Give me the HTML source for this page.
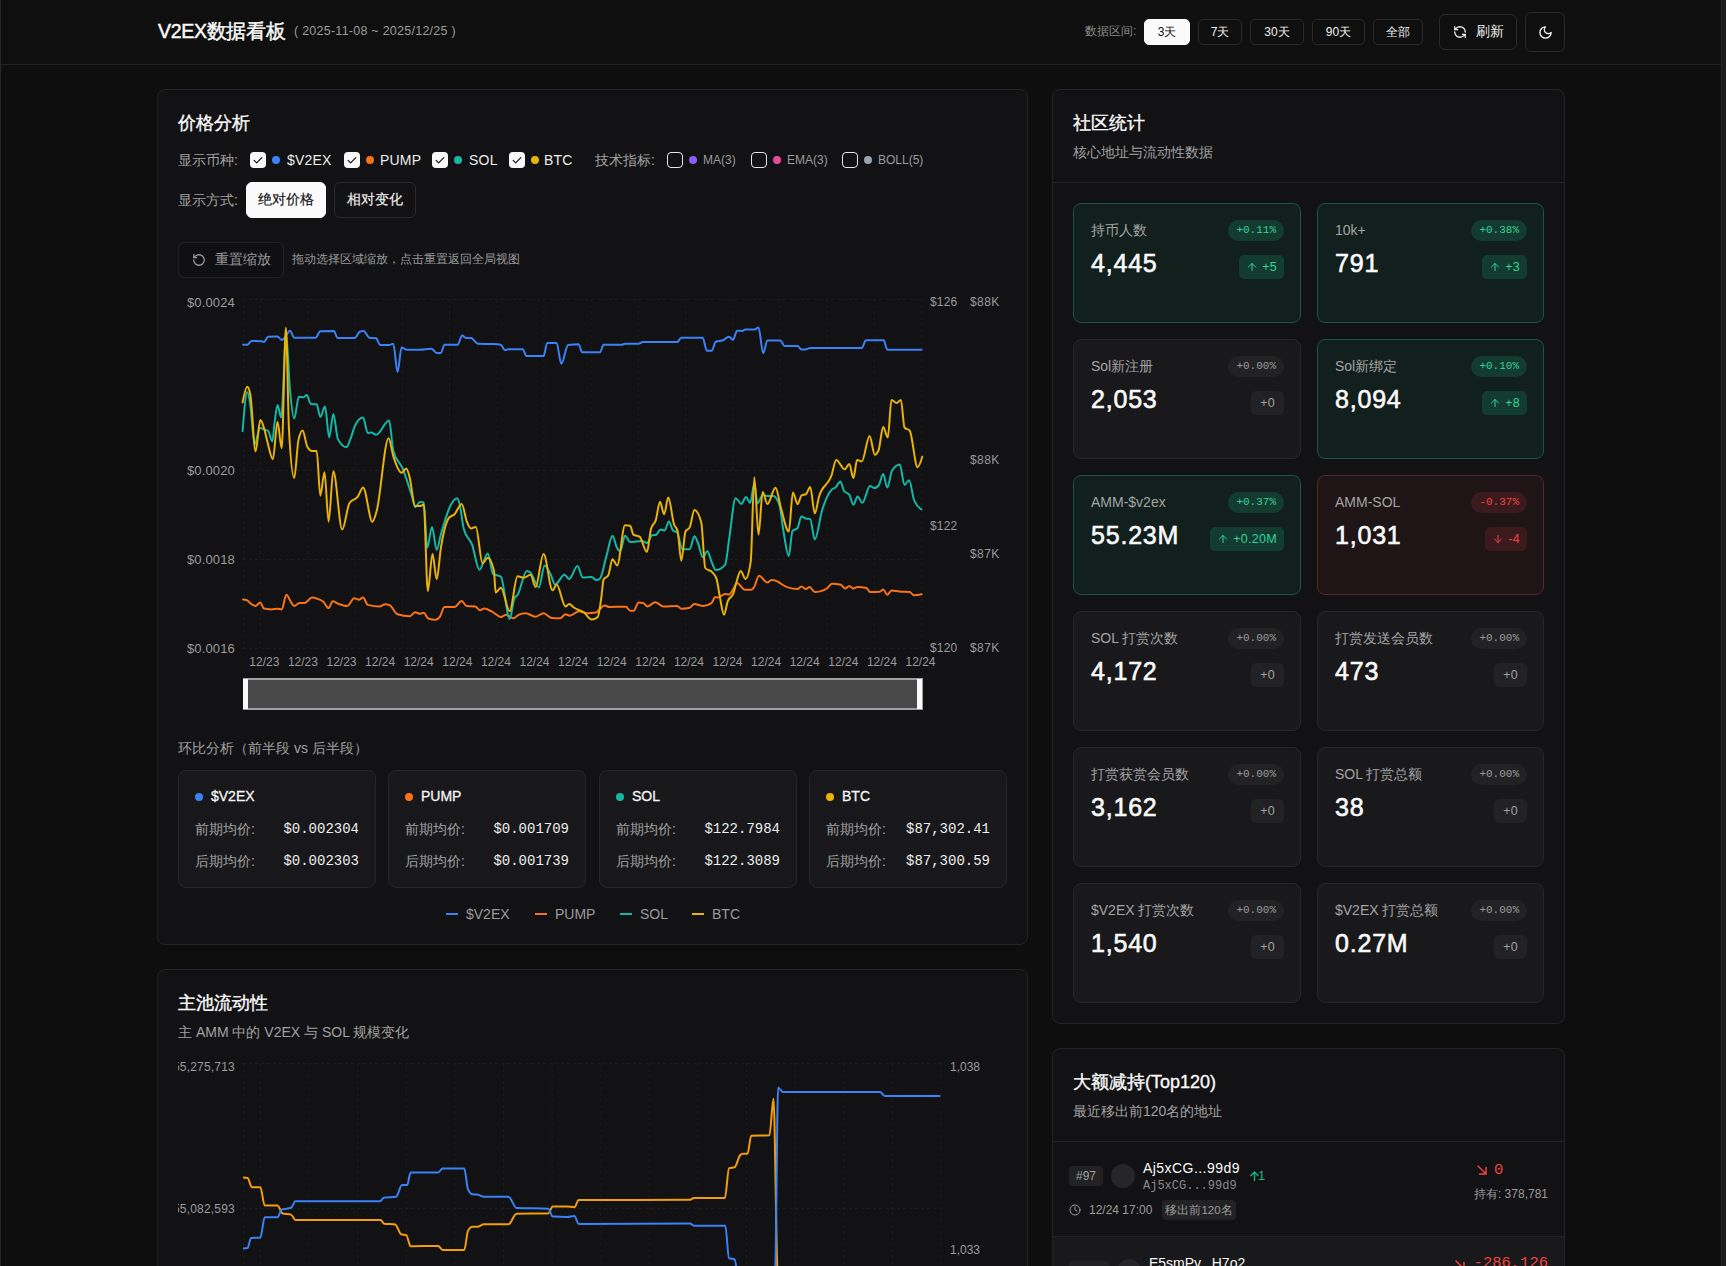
<!DOCTYPE html>
<html><head><meta charset="utf-8">
<style>
*{box-sizing:border-box;margin:0;padding:0}
html,body{width:1726px;height:1266px;overflow:hidden;background:#0e0e0e;font-family:"Liberation Sans",sans-serif;color:#ededed}
.abs{position:absolute}
.t{position:absolute;white-space:nowrap;line-height:1}
.mono{font-family:"Liberation Mono",monospace}
.edgeL{position:absolute;left:0;top:0;width:1px;height:1266px;background:#262626}
.edgeR{position:absolute;left:1721px;top:0;width:1px;height:1266px;background:#262626}
.sb{position:absolute;left:1722px;top:0;width:4px;height:1266px;background:#1b1b1b}
.hdr{position:absolute;left:1px;top:0;width:1720px;height:65px;background:#0f0f0f;border-bottom:1px solid #212124}
.btn{position:absolute;border:1px solid #2a2a2a;border-radius:5px;background:#0f0f0f;color:#f0f0f0;font-size:12px;display:flex;align-items:center;justify-content:center}
.card{position:absolute;background:#121214;border:1px solid #232326;border-radius:8px}
.tile{position:absolute;width:228px;height:120px;border-radius:8px;border:1px solid #262628;background:#19191b}
.tile.g{background:#111f1d;border-color:#17573f}
.tile.r{background:#1f1517;border-color:#5b2427}
.tile .lb{position:absolute;left:17px;top:19px;font-size:14px;color:#a3a3a3;line-height:1}
.tile .val{position:absolute;left:17px;top:47px;font-size:25px;color:#fafafa;line-height:1;-webkit-text-stroke:0.6px #fafafa;letter-spacing:0.8px}
.tile .pct{position:absolute;right:16px;top:16px;height:21px;padding:0 8px;border-radius:11px;background:#222224;color:#9a9a9a;font-size:11px;line-height:21px;font-family:"Liberation Mono",monospace}
.tile .dl{position:absolute;right:16px;top:51px;height:24px;padding:0 7px 0 7px;border-radius:5px;background:#222224;color:#a0a0a0;font-size:12.5px;line-height:25px;letter-spacing:0.3px}
.tile.n .dl{padding:0 9px}
.tile.g .pct{background:#133b2f;color:#34d399}
.tile.g .dl{background:#133c30;color:#34d399}
.tile.r .pct{background:#3a1a1c;color:#ef4444}
.tile.r .dl{background:#3a1a1c;color:#ef4444}
.cb{position:absolute;width:16px;height:16px;border-radius:4px}
.cb.on{background:#fafafa}
.cb.off{border:1.5px solid #e5e5e5}
.dot{position:absolute;width:8px;height:8px;border-radius:50%}
.lbl{position:absolute;font-size:14px;color:#a1a1a1;line-height:1;white-space:nowrap}
.box{position:absolute;top:770px;width:198px;height:118px;border-radius:8px;border:1px solid #262628;background:#18181a}
</style></head><body>
<div class="edgeL"></div><div class="edgeR"></div><div class="sb"></div>
<div class="hdr"></div>
<div class="t" style="left:158px;top:22px;font-size:19.5px;color:#fafafa;-webkit-text-stroke:0.45px #fafafa;letter-spacing:-0.3px">V2EX数据看板</div>
<div class="t" style="left:294px;top:25px;font-size:12.5px;color:#9a9a9a;letter-spacing:0.25px">( 2025-11-08 ~ 2025/12/25 )</div>

<div class="t" style="left:1085px;top:25px;font-size:12px;color:#8a8a8a">数据区间:</div>
<div class="btn" style="left:1144px;top:19px;width:46px;height:26px;background:#fafafa;border-color:#fafafa;color:#111">3天</div>
<div class="btn" style="left:1198px;top:19px;width:44px;height:26px">7天</div>
<div class="btn" style="left:1250px;top:19px;width:54px;height:26px">30天</div>
<div class="btn" style="left:1312px;top:19px;width:53px;height:26px">90天</div>
<div class="btn" style="left:1373px;top:19px;width:50px;height:26px">全部</div>
<div class="btn" style="left:1439px;top:14px;width:78px;height:36px;border-radius:6px;font-size:14px">
<svg width="14" height="14" viewBox="0 0 24 24" fill="none" stroke="#f0f0f0" stroke-width="2.2" stroke-linecap="round" stroke-linejoin="round" style="margin-right:9px"><path d="M21 12a9 9 0 0 0-9-9 9.75 9.75 0 0 0-6.74 2.74L3 8"/><path d="M3 3v5h5"/><path d="M3 12a9 9 0 0 0 9 9 9.75 9.75 0 0 0 6.74-2.74L21 16"/><path d="M16 16h5v5"/></svg>刷新</div>
<div class="btn" style="left:1525px;top:12px;width:40px;height:40px;border-radius:6px">
<svg width="15" height="15" viewBox="0 0 24 24" fill="none" stroke="#f0f0f0" stroke-width="2.2" stroke-linecap="round" stroke-linejoin="round"><path d="M12 3a6 6 0 0 0 9 9 9 9 0 1 1-9-9Z"/></svg></div>

<!-- LEFT CARD 1 -->
<div class="card" style="left:157px;top:89px;width:871px;height:856px"></div>
<div class="t" style="left:178px;top:114px;font-size:18px;color:#fafafa;-webkit-text-stroke:0.35px #fafafa">价格分析</div>
<div class="lbl" style="left:178px;top:153px">显示币种:</div>
<div class="cb on" style="left:250px;top:152px"><svg width="16" height="16" viewBox="0 0 16 16" style="position:absolute;left:0;top:0"><path d="M4.2 8.3l2.5 2.5L11.8 5.6" fill="none" stroke="#111" stroke-width="1.2" stroke-linecap="round" stroke-linejoin="round"/></svg></div>
<div class="dot" style="left:272px;top:156px;background:#3b82f6"></div>
<div class="t" style="left:287px;top:153px;font-size:14px;color:#ededed;letter-spacing:0.2px">$V2EX</div>
<div class="cb on" style="left:344px;top:152px"><svg width="16" height="16" viewBox="0 0 16 16" style="position:absolute;left:0;top:0"><path d="M4.2 8.3l2.5 2.5L11.8 5.6" fill="none" stroke="#111" stroke-width="1.2" stroke-linecap="round" stroke-linejoin="round"/></svg></div>
<div class="dot" style="left:366px;top:156px;background:#f97316"></div>
<div class="t" style="left:380px;top:153px;font-size:14px;color:#ededed;letter-spacing:0.2px">PUMP</div>
<div class="cb on" style="left:432px;top:152px"><svg width="16" height="16" viewBox="0 0 16 16" style="position:absolute;left:0;top:0"><path d="M4.2 8.3l2.5 2.5L11.8 5.6" fill="none" stroke="#111" stroke-width="1.2" stroke-linecap="round" stroke-linejoin="round"/></svg></div>
<div class="dot" style="left:454px;top:156px;background:#14b8a6"></div>
<div class="t" style="left:469px;top:153px;font-size:14px;color:#ededed;letter-spacing:0.2px">SOL</div>
<div class="cb on" style="left:509px;top:152px"><svg width="16" height="16" viewBox="0 0 16 16" style="position:absolute;left:0;top:0"><path d="M4.2 8.3l2.5 2.5L11.8 5.6" fill="none" stroke="#111" stroke-width="1.2" stroke-linecap="round" stroke-linejoin="round"/></svg></div>
<div class="dot" style="left:531px;top:156px;background:#eab308"></div>
<div class="t" style="left:544px;top:153px;font-size:14px;color:#ededed;letter-spacing:0.2px">BTC</div>
<div class="lbl" style="left:595px;top:153px">技术指标:</div>
<div class="cb off" style="left:667px;top:152px"></div>
<div class="dot" style="left:689px;top:156px;background:#8b5cf6"></div>
<div class="t" style="left:703px;top:154px;font-size:12px;color:#9a9a9a">MA(3)</div>
<div class="cb off" style="left:751px;top:152px"></div>
<div class="dot" style="left:773px;top:156px;background:#ec4899"></div>
<div class="t" style="left:787px;top:154px;font-size:12px;color:#9a9a9a">EMA(3)</div>
<div class="cb off" style="left:842px;top:152px"></div>
<div class="dot" style="left:864px;top:156px;background:#9ca3af"></div>
<div class="t" style="left:878px;top:154px;font-size:12px;color:#9a9a9a">BOLL(5)</div>
<div class="lbl" style="left:178px;top:193px">显示方式:</div>
<div class="btn" style="left:246px;top:182px;width:80px;height:36px;border-radius:6px;background:#fafafa;border-color:#fafafa;color:#111;font-size:14px;-webkit-text-stroke:0.15px #111">绝对价格</div>
<div class="btn" style="left:334px;top:182px;width:82px;height:36px;border-radius:6px;background:#121214;font-size:14px;-webkit-text-stroke:0.15px #f0f0f0">相对变化</div>
<div class="btn" style="left:178px;top:242px;width:106px;height:36px;border-radius:6px;background:#101012;border-color:#232325;color:#9a9a9a;font-size:14px">
<svg width="14" height="14" viewBox="0 0 24 24" fill="none" stroke="#9a9a9a" stroke-width="2.2" stroke-linecap="round" stroke-linejoin="round" style="margin-right:9px"><path d="M3 12a9 9 0 1 0 9-9 9.75 9.75 0 0 0-6.74 2.74L3 8"/><path d="M3 3v5h5"/></svg>重置缩放</div>
<div class="t" style="left:292px;top:253px;font-size:12px;color:#9a9a9a">拖动选择区域缩放，点击重置返回全局视图</div>

<div class="lbl" style="left:178px;top:741px">环比分析（前半段 vs 后半段）</div>
<div class="box" style="left:178px"></div>
<div class="dot" style="left:195px;top:793px;background:#3b82f6"></div>
<div class="t" style="left:211px;top:789px;font-size:14px;color:#f5f5f5;-webkit-text-stroke:0.3px #f5f5f5">$V2EX</div>
<div class="lbl" style="left:195px;top:822px">前期均价:</div>
<div class="lbl" style="left:195px;top:854px">后期均价:</div>
<div class="t mono" style="right:1367px;top:822px;font-size:14px;color:#ededed">$0.002304</div>
<div class="t mono" style="right:1367px;top:854px;font-size:14px;color:#ededed">$0.002303</div>
<div class="box" style="left:388px"></div>
<div class="dot" style="left:405px;top:793px;background:#f97316"></div>
<div class="t" style="left:421px;top:789px;font-size:14px;color:#f5f5f5;-webkit-text-stroke:0.3px #f5f5f5">PUMP</div>
<div class="lbl" style="left:405px;top:822px">前期均价:</div>
<div class="lbl" style="left:405px;top:854px">后期均价:</div>
<div class="t mono" style="right:1157px;top:822px;font-size:14px;color:#ededed">$0.001709</div>
<div class="t mono" style="right:1157px;top:854px;font-size:14px;color:#ededed">$0.001739</div>
<div class="box" style="left:599px"></div>
<div class="dot" style="left:616px;top:793px;background:#14b8a6"></div>
<div class="t" style="left:632px;top:789px;font-size:14px;color:#f5f5f5;-webkit-text-stroke:0.3px #f5f5f5">SOL</div>
<div class="lbl" style="left:616px;top:822px">前期均价:</div>
<div class="lbl" style="left:616px;top:854px">后期均价:</div>
<div class="t mono" style="right:946px;top:822px;font-size:14px;color:#ededed">$122.7984</div>
<div class="t mono" style="right:946px;top:854px;font-size:14px;color:#ededed">$122.3089</div>
<div class="box" style="left:809px"></div>
<div class="dot" style="left:826px;top:793px;background:#eab308"></div>
<div class="t" style="left:842px;top:789px;font-size:14px;color:#f5f5f5;-webkit-text-stroke:0.3px #f5f5f5">BTC</div>
<div class="lbl" style="left:826px;top:822px">前期均价:</div>
<div class="lbl" style="left:826px;top:854px">后期均价:</div>
<div class="t mono" style="right:736px;top:822px;font-size:14px;color:#ededed">$87,302.41</div>
<div class="t mono" style="right:736px;top:854px;font-size:14px;color:#ededed">$87,300.59</div>

<!-- LEFT CARD 2 -->
<div class="card" style="left:157px;top:969px;width:871px;height:400px"></div>
<div class="t" style="left:178px;top:994px;font-size:18px;color:#fafafa;-webkit-text-stroke:0.35px #fafafa">主池流动性</div>
<div class="lbl" style="left:178px;top:1025px">主 AMM 中的 V2EX 与 SOL 规模变化</div>

<!-- RIGHT CARD -->
<div class="card" style="left:1052px;top:89px;width:513px;height:935px"></div>
<div class="abs" style="left:1053px;top:182px;width:511px;height:1px;background:#232326"></div>
<div class="t" style="left:1073px;top:114px;font-size:18px;color:#fafafa;-webkit-text-stroke:0.35px #fafafa">社区统计</div>
<div class="lbl" style="left:1073px;top:145px">核心地址与流动性数据</div>
<div class="tile g" style="left:1073px;top:203px;width:228px"><div class="lb">持币人数</div><div class="val">4,445</div><div class="pct">+0.11%</div><div class="dl"><svg width="12" height="12" viewBox="0 0 24 24" fill="none" stroke="currentColor" stroke-width="2" stroke-linecap="round" stroke-linejoin="round" style="margin-right:4px;vertical-align:-1.5px"><path d="M12 19V5M5 12l7-7 7 7"/></svg>+5</div></div>
<div class="tile g" style="left:1317px;top:203px;width:227px"><div class="lb">10k+</div><div class="val">791</div><div class="pct">+0.38%</div><div class="dl"><svg width="12" height="12" viewBox="0 0 24 24" fill="none" stroke="currentColor" stroke-width="2" stroke-linecap="round" stroke-linejoin="round" style="margin-right:4px;vertical-align:-1.5px"><path d="M12 19V5M5 12l7-7 7 7"/></svg>+3</div></div>
<div class="tile n" style="left:1073px;top:339px;width:228px"><div class="lb">Sol新注册</div><div class="val">2,053</div><div class="pct">+0.00%</div><div class="dl">+0</div></div>
<div class="tile g" style="left:1317px;top:339px;width:227px"><div class="lb">Sol新绑定</div><div class="val">8,094</div><div class="pct">+0.10%</div><div class="dl"><svg width="12" height="12" viewBox="0 0 24 24" fill="none" stroke="currentColor" stroke-width="2" stroke-linecap="round" stroke-linejoin="round" style="margin-right:4px;vertical-align:-1.5px"><path d="M12 19V5M5 12l7-7 7 7"/></svg>+8</div></div>
<div class="tile g" style="left:1073px;top:475px;width:228px"><div class="lb">AMM-$v2ex</div><div class="val">55.23M</div><div class="pct">+0.37%</div><div class="dl"><svg width="12" height="12" viewBox="0 0 24 24" fill="none" stroke="currentColor" stroke-width="2" stroke-linecap="round" stroke-linejoin="round" style="margin-right:4px;vertical-align:-1.5px"><path d="M12 19V5M5 12l7-7 7 7"/></svg>+0.20M</div></div>
<div class="tile r" style="left:1317px;top:475px;width:227px"><div class="lb">AMM-SOL</div><div class="val">1,031</div><div class="pct">-0.37%</div><div class="dl"><svg width="12" height="12" viewBox="0 0 24 24" fill="none" stroke="currentColor" stroke-width="2" stroke-linecap="round" stroke-linejoin="round" style="margin-right:4px;vertical-align:-1.5px"><path d="M12 5v14M19 12l-7 7-7-7"/></svg>-4</div></div>
<div class="tile n" style="left:1073px;top:611px;width:228px"><div class="lb">SOL 打赏次数</div><div class="val">4,172</div><div class="pct">+0.00%</div><div class="dl">+0</div></div>
<div class="tile n" style="left:1317px;top:611px;width:227px"><div class="lb">打赏发送会员数</div><div class="val">473</div><div class="pct">+0.00%</div><div class="dl">+0</div></div>
<div class="tile n" style="left:1073px;top:747px;width:228px"><div class="lb">打赏获赏会员数</div><div class="val">3,162</div><div class="pct">+0.00%</div><div class="dl">+0</div></div>
<div class="tile n" style="left:1317px;top:747px;width:227px"><div class="lb">SOL 打赏总额</div><div class="val">38</div><div class="pct">+0.00%</div><div class="dl">+0</div></div>
<div class="tile n" style="left:1073px;top:883px;width:228px"><div class="lb">$V2EX 打赏次数</div><div class="val">1,540</div><div class="pct">+0.00%</div><div class="dl">+0</div></div>
<div class="tile n" style="left:1317px;top:883px;width:227px"><div class="lb">$V2EX 打赏总额</div><div class="val">0.27M</div><div class="pct">+0.00%</div><div class="dl">+0</div></div>

<!-- LIST CARD -->
<div class="card" style="left:1052px;top:1048px;width:513px;height:400px"></div>
<div class="t" style="left:1073px;top:1073px;font-size:18px;color:#fafafa;-webkit-text-stroke:0.35px #fafafa">大额减持(Top120)</div>
<div class="lbl" style="left:1073px;top:1104px">最近移出前120名的地址</div>
<div class="abs" style="left:1053px;top:1141px;width:511px;height:1px;background:#232326"></div>
<svg class="abs" style="left:0;top:0" width="1726" height="1266" viewBox="0 0 1726 1266">
<path d="M243,299.5H922" stroke="#1c1c1f" stroke-width="1" stroke-dasharray="3 3" fill="none"/>
<path d="M243,470.5H922" stroke="#1c1c1f" stroke-width="1" stroke-dasharray="3 3" fill="none"/>
<path d="M243,559.5H922" stroke="#1c1c1f" stroke-width="1" stroke-dasharray="3 3" fill="none"/>
<path d="M243,648.5H922" stroke="#1c1c1f" stroke-width="1" stroke-dasharray="3 3" fill="none"/>
<path d="M243.5,299V648" stroke="#1c1c1f" stroke-width="1" stroke-dasharray="3 3" fill="none"/>
<path d="M260.5,299V648" stroke="#1c1c1f" stroke-width="1" stroke-dasharray="3 3" fill="none"/>
<path d="M307.7,299V648" stroke="#1c1c1f" stroke-width="1" stroke-dasharray="3 3" fill="none"/>
<path d="M355.0,299V648" stroke="#1c1c1f" stroke-width="1" stroke-dasharray="3 3" fill="none"/>
<path d="M402.2,299V648" stroke="#1c1c1f" stroke-width="1" stroke-dasharray="3 3" fill="none"/>
<path d="M449.5,299V648" stroke="#1c1c1f" stroke-width="1" stroke-dasharray="3 3" fill="none"/>
<path d="M496.7,299V648" stroke="#1c1c1f" stroke-width="1" stroke-dasharray="3 3" fill="none"/>
<path d="M543.9,299V648" stroke="#1c1c1f" stroke-width="1" stroke-dasharray="3 3" fill="none"/>
<path d="M591.2,299V648" stroke="#1c1c1f" stroke-width="1" stroke-dasharray="3 3" fill="none"/>
<path d="M638.4,299V648" stroke="#1c1c1f" stroke-width="1" stroke-dasharray="3 3" fill="none"/>
<path d="M685.7,299V648" stroke="#1c1c1f" stroke-width="1" stroke-dasharray="3 3" fill="none"/>
<path d="M732.9,299V648" stroke="#1c1c1f" stroke-width="1" stroke-dasharray="3 3" fill="none"/>
<path d="M780.1,299V648" stroke="#1c1c1f" stroke-width="1" stroke-dasharray="3 3" fill="none"/>
<path d="M827.4,299V648" stroke="#1c1c1f" stroke-width="1" stroke-dasharray="3 3" fill="none"/>
<path d="M874.6,299V648" stroke="#1c1c1f" stroke-width="1" stroke-dasharray="3 3" fill="none"/>
<path d="M921.9,299V648" stroke="#1c1c1f" stroke-width="1" stroke-dasharray="3 3" fill="none"/>
<path d="M243.1,599.5C244.33,599.62 245.57,599.73 246.8,600.2C248.37,600.79 249.93,603.21 251.5,604.2C252.87,605.06 254.23,606.00 255.6,606.0C257.17,606.00 258.73,602.60 260.3,602.6C261.53,602.60 262.77,608.33 264.0,608.6C266.43,609.13 268.87,609.40 271.3,609.4C273.37,609.40 275.43,608.80 277.5,608.8C278.90,608.80 280.30,609.40 281.7,609.4C283.27,609.40 284.83,594.70 286.4,594.7C287.97,594.70 289.53,600.17 291.1,602.3C292.13,603.71 293.17,606.00 294.2,606.0C295.93,606.00 297.67,602.90 299.4,602.9C301.17,602.90 302.93,602.90 304.7,602.9C307.13,602.90 309.57,597.60 312.0,597.6C313.73,597.60 315.47,598.11 317.2,598.7C319.27,599.41 321.33,599.97 323.4,601.8C325.13,603.34 326.87,608.10 328.6,608.1C330.00,608.10 331.40,601.30 332.8,601.3C334.53,601.30 336.27,602.95 338.0,603.6C341.13,604.78 344.27,606.00 347.4,606.0C349.67,606.00 351.93,598.20 354.2,598.2C355.77,598.20 357.33,599.70 358.9,599.7C360.30,599.70 361.70,597.60 363.1,597.6C364.67,597.60 366.23,604.48 367.8,604.9C371.77,605.97 375.73,606.50 379.7,606.5C381.47,606.50 383.23,604.20 385.0,604.2C386.53,604.20 388.07,604.53 389.6,605.2C392.23,606.34 394.87,613.50 397.5,614.3C401.67,615.57 405.83,616.20 410.0,616.2C411.73,616.20 413.47,612.20 415.2,612.2C416.80,612.20 418.40,613.80 420.0,613.8C421.23,613.80 422.47,612.80 423.7,612.8C425.23,612.80 426.77,617.95 428.3,618.5C430.73,619.37 433.17,619.80 435.6,619.8C437.00,619.80 438.40,618.80 439.8,616.9C441.37,614.77 442.93,607.00 444.5,607.0C447.80,607.00 451.10,607.00 454.4,607.0C456.83,607.00 459.27,601.10 461.7,601.1C463.27,601.10 464.83,605.82 466.4,606.0C469.37,606.33 472.33,606.17 475.3,606.5C476.87,606.68 478.43,610.20 480.0,610.2C481.37,610.20 482.73,608.60 484.1,608.6C486.73,608.60 489.37,610.43 492.0,611.7C494.97,613.13 497.93,616.90 500.9,616.9C502.63,616.90 504.37,614.80 506.1,614.8C508.53,614.80 510.97,618.20 513.4,618.2C515.13,618.20 516.87,615.51 518.6,614.8C521.03,613.80 523.47,613.30 525.9,613.3C529.03,613.30 532.17,616.70 535.3,616.7C538.07,616.70 540.83,613.30 543.6,613.3C546.40,613.30 549.20,617.87 552.0,618.0C554.77,618.13 557.53,618.20 560.3,618.2C562.03,618.20 563.77,614.30 565.5,614.3C566.90,614.30 568.30,615.70 569.7,615.7C572.83,615.70 575.97,611.20 579.1,611.2C581.87,611.20 584.63,613.30 587.4,613.3C590.20,613.30 593.00,613.03 595.8,612.5C598.73,611.94 601.67,605.50 604.6,605.5C606.17,605.50 607.73,607.00 609.3,607.0C614.87,607.00 620.43,606.70 626.0,606.7C627.40,606.70 628.80,610.70 630.2,610.7C631.40,610.70 632.60,610.70 633.8,610.7C635.37,610.70 636.93,602.50 638.5,602.5C640.07,602.50 641.63,602.63 643.2,602.9C644.60,603.14 646.00,606.50 647.4,606.5C650.00,606.50 652.60,602.30 655.2,602.3C658.00,602.30 660.80,606.50 663.6,606.5C668.10,606.50 672.60,606.00 677.1,606.0C678.50,606.00 679.90,608.80 681.3,608.8C684.07,608.80 686.83,608.47 689.6,607.8C691.17,607.42 692.73,603.90 694.3,603.9C697.27,603.90 700.23,606.00 703.2,606.0C705.97,606.00 708.73,605.07 711.5,603.2C712.73,602.37 713.97,597.10 715.2,597.1C716.07,597.10 716.93,597.60 717.8,597.6C720.23,597.60 722.67,594.00 725.1,594.0C726.50,594.00 727.90,594.50 729.3,594.5C730.67,594.50 732.03,590.83 733.4,588.8C734.63,586.97 735.87,583.00 737.1,583.0C739.70,583.00 742.30,589.80 744.9,589.8C747.00,589.80 749.10,589.80 751.2,589.8C752.23,589.80 753.27,588.28 754.3,586.7C755.87,584.30 757.43,575.70 759.0,575.7C761.77,575.70 764.53,582.50 767.3,582.5C768.70,582.50 770.10,579.90 771.5,579.9C772.40,579.90 773.30,580.11 774.2,580.3C778.70,581.25 783.20,585.98 787.7,587.4C791.00,588.44 794.30,589.00 797.6,589.0C798.83,589.00 800.07,586.40 801.3,586.4C802.87,586.40 804.43,589.00 806.0,589.0C807.20,589.00 808.40,586.90 809.6,586.9C811.33,586.90 813.07,592.10 814.8,592.1C816.57,592.10 818.33,591.87 820.1,591.4C822.33,590.81 824.57,590.06 826.8,588.5C828.53,587.29 830.27,583.80 832.0,583.8C834.97,583.80 837.93,584.13 840.9,584.8C842.30,585.11 843.70,588.50 845.1,588.5C846.50,588.50 847.90,585.90 849.3,585.9C850.67,585.90 852.03,588.50 853.4,588.5C854.80,588.50 856.20,586.90 857.6,586.9C860.57,586.90 863.53,587.23 866.5,587.9C867.70,588.17 868.90,592.10 870.1,592.1C873.23,592.10 876.37,592.00 879.5,591.8C880.73,591.72 881.97,589.50 883.2,589.5C884.57,589.50 885.93,594.70 887.3,594.7C888.70,594.70 890.10,590.50 891.5,590.5C894.10,590.50 896.70,591.35 899.3,591.6C902.77,591.93 906.23,591.77 909.7,592.1C911.10,592.23 912.50,595.20 913.9,595.2C916.50,595.20 919.10,594.70 921.7,594.2" stroke="#f97316" stroke-width="2" fill="none" stroke-linejoin="round" stroke-linecap="round"/>
<path d="M243.1,344.7C244.50,344.70 245.90,344.70 247.3,344.7C248.70,344.70 250.10,340.90 251.5,340.9C254.63,340.90 257.77,341.00 260.9,341.2C261.93,341.27 262.97,341.90 264.0,341.9C265.40,341.90 266.80,336.76 268.2,336.7C271.30,336.57 274.40,336.50 277.5,336.5C278.90,336.50 280.30,340.00 281.7,340.0C282.73,340.00 283.77,338.70 284.8,337.7C286.53,336.02 288.27,330.70 290.0,330.7C291.40,330.70 292.80,337.70 294.2,337.7C301.33,337.70 308.47,337.70 315.6,337.7C317.17,337.70 318.73,331.35 320.3,331.3C324.83,331.17 329.37,331.10 333.9,331.1C335.10,331.10 336.30,337.90 337.5,337.9C343.23,337.90 348.97,337.90 354.7,337.9C356.47,337.90 358.23,331.99 360.0,331.5C361.20,331.17 362.40,331.00 363.6,331.0C365.50,331.00 367.40,337.42 369.3,337.7C371.53,338.03 373.77,337.87 376.0,338.2C377.43,338.41 378.87,345.00 380.3,345.0C383.23,345.00 386.17,345.00 389.1,345.0C390.50,345.00 391.90,343.80 393.3,343.8C394.70,343.80 396.10,372.10 397.5,372.1C398.87,372.10 400.23,347.60 401.6,347.6C403.37,347.60 405.13,349.70 406.9,349.7C411.27,349.70 415.63,349.70 420.0,349.7C423.83,349.70 427.67,348.70 431.5,348.7C433.23,348.70 434.97,352.90 436.7,352.9C438.10,352.90 439.50,352.90 440.9,352.9C442.10,352.90 443.30,344.70 444.5,344.7C448.83,344.70 453.17,344.70 457.5,344.7C459.07,344.70 460.63,335.60 462.2,335.6C463.43,335.60 464.67,337.90 465.9,337.9C467.63,337.90 469.37,337.90 471.1,337.9C473.37,337.90 475.63,343.74 477.9,343.8C482.93,343.93 487.97,343.87 493.0,344.0C495.60,344.07 498.20,344.23 500.8,344.7C502.20,344.95 503.60,350.20 505.0,350.2C506.20,350.20 507.40,349.20 508.6,349.2C513.30,349.20 518.00,349.20 522.7,349.2C523.93,349.20 525.17,356.00 526.4,356.0C532.13,356.00 537.87,356.00 543.6,356.0C544.80,356.00 546.00,342.90 547.2,342.9C550.33,342.90 553.47,342.90 556.6,342.9C558.17,342.90 559.73,363.80 561.3,363.8C563.57,363.80 565.83,345.35 568.1,345.0C571.57,344.47 575.03,344.20 578.5,344.2C579.73,344.20 580.97,352.30 582.2,352.3C588.13,352.30 594.07,352.30 600.0,352.3C601.20,352.30 602.40,344.70 603.6,344.7C609.70,344.70 615.80,344.70 621.9,344.7C622.93,344.70 623.97,343.80 625.0,343.8C629.53,343.80 634.07,343.80 638.6,343.8C640.00,343.80 641.40,342.10 642.8,342.1C654.27,342.10 665.73,342.10 677.2,342.1C678.57,342.10 679.93,337.70 681.3,337.7C688.43,337.70 695.57,337.70 702.7,337.7C704.10,337.70 705.50,350.80 706.9,350.8C708.47,350.80 710.03,350.80 711.6,350.8C713.00,350.80 714.40,342.24 715.8,341.7C718.23,340.77 720.67,341.23 723.1,340.3C725.00,339.57 726.90,336.70 728.8,336.7C730.20,336.70 731.60,339.80 733.0,339.8C734.37,339.80 735.73,330.70 737.1,330.7C738.87,330.70 740.63,331.00 742.4,331.0C743.27,331.00 744.13,329.60 745.0,329.6C748.10,329.60 751.20,329.60 754.3,329.6C755.70,329.60 757.10,327.60 758.5,327.6C760.07,327.60 761.63,353.20 763.2,353.2C764.60,353.20 766.00,340.50 767.4,340.5C771.73,340.50 776.07,340.50 780.4,340.5C781.80,340.50 783.20,346.10 784.6,346.1C788.93,346.10 793.27,345.90 797.6,345.9C798.83,345.90 800.07,349.50 801.3,349.5C802.70,349.50 804.10,349.50 805.5,349.5C807.07,349.50 808.63,347.90 810.2,347.9C827.40,347.90 844.60,347.90 861.8,347.9C863.17,347.90 864.53,340.30 865.9,340.3C871.83,340.30 877.77,340.30 883.7,340.3C884.90,340.30 886.10,349.70 887.3,349.7C898.77,349.70 910.23,349.70 921.7,349.7" stroke="#3b82f6" stroke-width="2" fill="none" stroke-linejoin="round" stroke-linecap="round"/>
<path d="M242.6,431.1C244.17,411.55 245.73,392.00 247.3,392.0C248.33,392.00 249.37,398.83 250.4,405.5C251.80,414.54 253.20,444.60 254.6,444.6C256.40,444.60 258.20,428.00 260.0,428.0C261.50,428.00 263.00,428.92 264.5,429.5C265.73,429.98 266.97,430.03 268.2,431.1C269.57,432.28 270.93,441.50 272.3,441.5C273.00,441.50 273.70,429.48 274.4,424.3C275.43,416.66 276.47,405.00 277.5,405.0C278.73,405.00 279.97,417.50 281.2,417.5C282.87,417.50 284.53,335.00 286.2,335.0C287.47,335.00 288.73,376.28 290.0,390.0C291.40,405.17 292.80,418.60 294.2,418.6C295.77,418.60 297.33,396.70 298.9,396.7C300.47,396.70 302.03,397.20 303.6,397.2C304.63,397.20 305.67,394.90 306.7,394.9C308.10,394.90 309.50,403.86 310.9,404.0C312.83,404.20 314.77,404.10 316.7,404.3C317.90,404.42 319.10,417.00 320.3,417.0C321.87,417.00 323.43,406.60 325.0,406.6C326.40,406.60 327.80,437.30 329.2,437.3C330.57,437.30 331.93,413.90 333.3,413.9C334.87,413.90 336.43,436.49 338.0,439.4C340.80,444.60 343.60,447.20 346.4,447.2C347.77,447.20 349.13,442.22 350.5,438.9C352.07,435.09 353.63,428.39 355.2,425.3C357.83,420.10 360.47,417.50 363.1,417.5C364.67,417.50 366.23,433.10 367.8,433.1C369.00,433.10 370.20,432.60 371.4,432.6C372.97,432.60 374.53,434.70 376.1,434.7C380.43,434.70 384.77,420.60 389.1,420.6C390.50,420.60 391.90,445.63 393.3,450.9C396.43,462.70 399.57,460.97 402.7,468.6C405.83,476.23 408.97,486.40 412.1,496.7C413.13,500.10 414.17,507.20 415.2,507.2C416.80,507.20 418.40,501.90 420.0,501.9C421.23,501.90 422.47,502.07 423.7,502.4C424.90,502.72 426.10,547.80 427.3,547.8C428.87,547.80 430.43,526.90 432.0,526.9C433.57,526.90 435.13,549.90 436.7,549.9C438.10,549.90 439.50,539.10 440.9,534.2C444.37,522.07 447.83,509.80 451.3,504.0C453.20,500.82 455.10,498.30 457.0,498.3C457.87,498.30 458.73,500.85 459.6,504.0C461.00,509.08 462.40,523.70 463.8,529.0C466.57,539.47 469.33,537.21 472.1,544.7C474.53,551.29 476.97,569.70 479.4,569.7C482.20,569.70 485.00,553.50 487.8,553.5C489.53,553.50 491.27,572.63 493.0,573.9C495.63,575.83 498.27,574.87 500.9,576.8C503.83,578.95 506.77,619.00 509.7,619.0C511.27,619.00 512.83,601.43 514.4,598.2C515.43,596.07 516.47,596.46 517.5,595.0C520.63,590.58 523.77,571.00 526.9,571.0C528.10,571.00 529.30,571.75 530.5,572.8C533.30,575.24 536.10,587.40 538.9,587.4C540.80,587.40 542.70,565.50 544.6,565.5C546.53,565.50 548.47,570.22 550.4,573.9C551.97,576.89 553.53,584.60 555.1,584.6C558.23,584.60 561.37,574.70 564.5,574.7C566.03,574.70 567.57,579.10 569.1,579.1C571.90,579.10 574.70,566.00 577.5,566.0C579.23,566.00 580.97,577.50 582.7,577.5C585.67,577.50 588.63,577.00 591.6,577.0C593.13,577.00 594.67,580.10 596.2,580.1C597.47,580.10 598.73,579.57 600.0,578.5C602.10,576.73 604.20,563.79 606.3,556.6C608.37,549.53 610.43,535.70 612.5,535.7C613.90,535.70 615.30,544.57 616.7,547.2C617.90,549.45 619.10,551.30 620.3,551.3C621.87,551.30 623.43,535.70 625.0,535.7C626.73,535.70 628.47,542.00 630.2,542.0C634.03,542.00 637.87,540.90 641.7,540.9C643.43,540.90 645.17,543.00 646.9,543.0C648.63,543.00 650.37,535.61 652.1,535.2C653.50,534.87 654.90,535.03 656.3,534.7C657.70,534.37 659.10,529.40 660.5,529.4C661.90,529.40 663.30,530.50 664.7,530.5C666.07,530.50 667.43,521.60 668.8,521.6C670.20,521.60 671.60,529.10 673.0,530.5C674.40,531.90 675.80,531.20 677.2,532.6C678.93,534.33 680.67,549.30 682.4,549.3C684.83,549.30 687.27,549.30 689.7,549.3C691.27,549.30 692.83,536.20 694.4,536.2C695.60,536.20 696.80,540.16 698.0,543.0C699.57,546.71 701.13,557.10 702.7,557.1C704.27,557.10 705.83,551.30 707.4,551.3C708.80,551.30 710.20,558.67 711.6,561.8C713.00,564.93 714.40,570.10 715.8,570.1C718.90,570.10 722.00,568.37 725.1,564.9C726.50,563.33 727.90,546.74 729.3,537.8C731.40,524.39 733.50,498.20 735.6,498.2C737.50,498.20 739.40,503.90 741.3,503.9C742.87,503.90 744.43,497.10 746.0,497.1C747.40,497.10 748.80,502.90 750.2,502.9C751.57,502.90 752.93,483.60 754.3,483.6C755.37,483.60 756.43,503.40 757.5,503.4C759.23,503.40 760.97,495.00 762.7,495.0C764.43,495.00 766.17,496.10 767.9,496.1C769.63,496.10 771.37,496.10 773.1,496.1C775.20,496.10 777.30,499.07 779.4,505.0C780.80,508.96 782.20,524.22 783.6,532.1C785.33,541.86 787.07,556.10 788.8,556.1C790.00,556.10 791.20,532.53 792.4,531.1C794.13,529.03 795.87,530.07 797.6,528.0C798.83,526.53 800.07,516.50 801.3,516.5C802.87,516.50 804.43,518.23 806.0,518.6C807.40,518.93 808.80,518.77 810.2,519.1C811.73,519.47 813.27,539.40 814.8,539.4C817.23,539.40 819.67,517.98 822.1,510.2C825.23,500.19 828.37,493.33 831.5,489.9C832.90,488.37 834.30,488.59 835.7,487.3C837.27,485.86 838.83,481.40 840.4,481.4C841.60,481.40 842.80,489.32 844.0,491.0C845.77,493.47 847.53,492.23 849.3,494.7C850.67,496.61 852.03,504.80 853.4,504.8C854.80,504.80 856.20,496.50 857.6,496.5C859.17,496.50 860.73,502.70 862.3,502.7C864.87,502.70 867.43,486.00 870.0,486.0C871.43,486.00 872.87,488.10 874.3,488.1C875.87,488.10 877.43,487.00 879.0,484.8C880.40,482.83 881.80,474.00 883.2,474.0C884.57,474.00 885.93,487.50 887.3,487.5C888.87,487.50 890.43,473.29 892.0,470.8C894.60,466.67 897.20,464.60 899.8,464.6C901.37,464.60 902.93,484.90 904.5,484.9C906.07,484.90 907.63,480.20 909.2,480.2C910.77,480.20 912.33,495.38 913.9,499.5C916.43,506.17 918.97,507.83 921.5,509.5" stroke="#14b8a6" stroke-width="2" fill="none" stroke-linejoin="round" stroke-linecap="round"/>
<path d="M242.6,402.4C244.17,394.55 245.73,386.70 247.3,386.7C248.33,386.70 249.37,389.50 250.4,395.1C252.13,404.49 253.87,451.40 255.6,451.4C257.17,451.40 258.73,420.10 260.3,420.1C261.53,420.10 262.77,424.12 264.0,428.0C265.03,431.25 266.07,436.54 267.1,440.4C269.03,447.62 270.97,459.20 272.9,459.2C274.43,459.20 275.97,421.70 277.5,421.7C278.90,421.70 280.30,448.30 281.7,448.3C283.10,448.30 284.50,327.80 285.9,327.8C286.93,327.80 287.97,410.92 289.0,430.0C290.73,462.00 292.47,478.00 294.2,478.0C295.60,478.00 297.00,447.00 298.4,440.4C299.80,433.80 301.20,430.50 302.6,430.5C304.17,430.50 305.73,443.90 307.3,446.7C308.87,449.50 310.43,450.90 312.0,450.9C313.57,450.90 315.13,450.90 316.7,450.9C317.90,450.90 319.10,495.70 320.3,495.7C321.70,495.70 323.10,472.20 324.5,472.2C325.87,472.20 327.23,521.80 328.6,521.8C330.17,521.80 331.73,471.20 333.3,471.2C336.27,471.20 339.23,529.60 342.2,529.6C344.63,529.60 347.07,506.69 349.5,503.0C352.27,498.80 355.03,500.48 357.8,496.7C359.57,494.29 361.33,487.40 363.1,487.4C366.20,487.40 369.30,521.80 372.4,521.8C373.80,521.80 375.20,516.10 376.6,511.3C380.60,497.58 384.60,438.30 388.6,438.3C390.17,438.30 391.73,451.17 393.3,456.1C396.07,464.80 398.83,472.80 401.6,472.8C403.17,472.80 404.73,468.60 406.3,468.6C407.37,468.60 408.43,473.16 409.5,476.9C411.40,483.56 413.30,506.10 415.2,506.1C416.80,506.10 418.40,506.10 420.0,506.1C421.23,506.10 422.47,504.50 423.7,504.5C425.07,504.50 426.43,591.10 427.8,591.1C429.37,591.10 430.93,554.00 432.5,554.0C433.90,554.00 435.30,579.10 436.7,579.1C438.10,579.10 439.50,556.44 440.9,547.8C443.67,530.72 446.43,520.80 449.2,517.5C450.93,515.43 452.67,516.03 454.4,514.4C456.83,512.11 459.27,504.00 461.7,504.0C463.43,504.00 465.17,517.51 466.9,521.7C468.30,525.08 469.70,528.50 471.1,528.5C472.67,528.50 474.23,526.90 475.8,526.9C478.07,526.90 480.33,563.40 482.6,563.4C484.33,563.40 486.07,557.70 487.8,557.7C489.87,557.70 491.93,562.03 494.0,570.7C494.53,572.94 495.07,592.40 495.6,592.4C497.37,592.40 499.13,587.70 500.9,587.7C503.83,587.70 506.77,611.20 509.7,611.2C512.30,611.20 514.90,576.30 517.5,576.3C519.60,576.30 521.70,577.80 523.8,577.8C526.07,577.80 528.33,574.70 530.6,574.7C532.23,574.70 533.87,587.00 535.5,587.0C538.20,587.00 540.90,554.00 543.6,554.0C546.57,554.00 549.53,590.30 552.5,590.3C553.87,590.30 555.23,584.60 556.6,584.6C559.57,584.60 562.53,606.50 565.5,606.5C566.73,606.50 567.97,603.90 569.2,603.9C570.77,603.90 572.33,606.43 573.9,607.5C577.37,609.88 580.83,610.20 584.3,612.8C586.73,614.62 589.17,619.50 591.6,619.5C593.67,619.50 595.73,618.63 597.8,616.9C599.03,615.87 600.27,604.87 601.5,596.1C602.20,591.12 602.90,580.62 603.6,579.4C605.17,576.67 606.73,578.03 608.3,575.3C609.70,572.86 611.10,559.20 612.5,559.2C614.07,559.20 615.63,565.40 617.2,565.4C619.80,565.40 622.40,525.30 625.0,525.3C626.73,525.30 628.47,525.47 630.2,525.8C631.27,526.01 632.33,534.01 633.4,534.7C635.47,536.03 637.53,535.37 639.6,536.7C642.03,538.27 644.47,551.90 646.9,551.9C648.30,551.90 649.70,533.34 651.1,528.4C652.67,522.87 654.23,525.01 655.8,520.1C657.20,515.71 658.60,501.80 660.0,501.8C661.37,501.80 662.73,514.30 664.1,514.3C665.50,514.30 666.90,497.60 668.3,497.6C670.20,497.60 672.10,518.44 674.0,524.2C675.23,527.94 676.47,526.63 677.7,531.5C678.90,536.24 680.10,560.70 681.3,560.7C682.70,560.70 684.10,534.23 685.5,531.5C686.90,528.77 688.30,530.13 689.7,527.4C691.27,524.34 692.83,510.10 694.4,510.1C696.67,510.10 698.93,514.10 701.2,522.1C702.57,526.92 703.93,566.28 705.3,568.0C707.73,571.07 710.17,569.53 712.6,572.6C713.97,574.32 715.33,574.87 716.7,579.4C717.77,582.94 718.83,591.77 719.9,597.1C721.27,603.93 722.63,614.80 724.0,614.8C725.23,614.80 726.47,604.68 727.7,601.3C729.60,596.10 731.50,598.70 733.4,593.5C734.47,590.58 735.53,584.94 736.6,581.5C737.97,577.09 739.33,571.00 740.7,571.0C742.27,571.00 743.83,578.90 745.4,578.9C747.17,578.90 748.93,573.20 750.7,561.8C751.90,554.06 753.10,477.30 754.3,477.3C755.70,477.30 757.10,534.70 758.5,534.7C759.90,534.70 761.30,491.90 762.7,491.9C764.27,491.90 765.83,503.90 767.4,503.9C770.10,503.90 772.80,487.80 775.5,487.8C777.33,487.80 779.17,501.94 781.0,508.2C783.60,517.08 786.20,531.60 788.8,531.6C790.17,531.60 791.53,492.50 792.9,492.5C794.47,492.50 796.03,504.20 797.6,504.2C798.90,504.20 800.20,496.25 801.5,495.5C803.00,494.63 804.50,495.07 806.0,494.2C807.40,493.39 808.80,487.00 810.2,487.0C811.73,487.00 813.27,513.40 814.8,513.4C816.20,513.40 817.60,501.45 819.0,496.7C823.17,482.57 827.33,487.48 831.5,475.5C833.07,470.99 834.63,459.90 836.2,459.9C839.00,459.90 841.80,469.30 844.6,469.3C846.17,469.30 847.73,464.00 849.3,464.0C850.67,464.00 852.03,478.10 853.4,478.1C854.63,478.10 855.87,459.90 857.1,459.9C858.67,459.90 860.23,461.40 861.8,461.4C864.40,461.40 867.00,435.90 869.6,435.9C871.33,435.90 873.07,454.70 874.8,454.7C876.03,454.70 877.27,453.30 878.5,450.5C880.07,446.94 881.63,427.00 883.2,427.0C884.73,427.00 886.27,437.50 887.8,437.5C889.03,437.50 890.27,399.90 891.5,399.9C893.23,399.90 894.97,403.00 896.7,403.0C898.10,403.00 899.50,399.90 900.9,399.9C902.10,399.90 903.30,426.02 904.5,427.5C906.23,429.63 907.97,428.57 909.7,430.7C912.33,433.94 914.97,467.20 917.6,467.2C919.17,467.20 920.73,461.95 922.3,456.7" stroke="#eab308" stroke-width="2" fill="none" stroke-linejoin="round" stroke-linecap="round"/>
</svg>
<div class="t" style="font-size:12px;color:#9a9a9a;right:1491px;top:295.5px;font-size:13px;letter-spacing:0.15px">$0.0024</div>
<div class="t" style="font-size:12px;color:#9a9a9a;right:1491px;top:463.5px;font-size:13px;letter-spacing:0.15px">$0.0020</div>
<div class="t" style="font-size:12px;color:#9a9a9a;right:1491px;top:552.5px;font-size:13px;letter-spacing:0.15px">$0.0018</div>
<div class="t" style="font-size:12px;color:#9a9a9a;right:1491px;top:641.5px;font-size:13px;letter-spacing:0.15px">$0.0016</div>
<div class="t" style="font-size:12px;color:#9a9a9a;left:930px;top:296.0px;letter-spacing:0.2px">$126</div>
<div class="t" style="font-size:12px;color:#9a9a9a;left:930px;top:520.0px;letter-spacing:0.2px">$122</div>
<div class="t" style="font-size:12px;color:#9a9a9a;left:930px;top:642.0px;letter-spacing:0.2px">$120</div>
<div class="t" style="font-size:12px;color:#9a9a9a;left:970px;top:296.0px;letter-spacing:0.4px">$88K</div>
<div class="t" style="font-size:12px;color:#9a9a9a;left:970px;top:454.0px;letter-spacing:0.4px">$88K</div>
<div class="t" style="font-size:12px;color:#9a9a9a;left:970px;top:548.0px;letter-spacing:0.4px">$87K</div>
<div class="t" style="font-size:12px;color:#9a9a9a;left:970px;top:642.0px;letter-spacing:0.4px">$87K</div>
<div class="t" style="font-size:12px;color:#9a9a9a;left:248.8px;top:656px;width:31px;text-align:center">12/23</div>
<div class="t" style="font-size:12px;color:#9a9a9a;left:287.4px;top:656px;width:31px;text-align:center">12/23</div>
<div class="t" style="font-size:12px;color:#9a9a9a;left:326.0px;top:656px;width:31px;text-align:center">12/23</div>
<div class="t" style="font-size:12px;color:#9a9a9a;left:364.6px;top:656px;width:31px;text-align:center">12/24</div>
<div class="t" style="font-size:12px;color:#9a9a9a;left:403.2px;top:656px;width:31px;text-align:center">12/24</div>
<div class="t" style="font-size:12px;color:#9a9a9a;left:441.8px;top:656px;width:31px;text-align:center">12/24</div>
<div class="t" style="font-size:12px;color:#9a9a9a;left:480.4px;top:656px;width:31px;text-align:center">12/24</div>
<div class="t" style="font-size:12px;color:#9a9a9a;left:519.0px;top:656px;width:31px;text-align:center">12/24</div>
<div class="t" style="font-size:12px;color:#9a9a9a;left:557.6px;top:656px;width:31px;text-align:center">12/24</div>
<div class="t" style="font-size:12px;color:#9a9a9a;left:596.2px;top:656px;width:31px;text-align:center">12/24</div>
<div class="t" style="font-size:12px;color:#9a9a9a;left:634.8px;top:656px;width:31px;text-align:center">12/24</div>
<div class="t" style="font-size:12px;color:#9a9a9a;left:673.4px;top:656px;width:31px;text-align:center">12/24</div>
<div class="t" style="font-size:12px;color:#9a9a9a;left:712.0px;top:656px;width:31px;text-align:center">12/24</div>
<div class="t" style="font-size:12px;color:#9a9a9a;left:750.6px;top:656px;width:31px;text-align:center">12/24</div>
<div class="t" style="font-size:12px;color:#9a9a9a;left:789.2px;top:656px;width:31px;text-align:center">12/24</div>
<div class="t" style="font-size:12px;color:#9a9a9a;left:827.8px;top:656px;width:31px;text-align:center">12/24</div>
<div class="t" style="font-size:12px;color:#9a9a9a;left:866.4px;top:656px;width:31px;text-align:center">12/24</div>
<div class="t" style="font-size:12px;color:#9a9a9a;left:905.0px;top:656px;width:31px;text-align:center">12/24</div>
<div class="abs" style="left:242.5px;top:678px;width:680.5px;height:32px;background:#484848;border:2px solid #a0a0a0"></div>
<div class="abs" style="left:243px;top:679px;width:5px;height:30px;background:#fafafa"></div>
<div class="abs" style="left:917px;top:679px;width:5px;height:30px;background:#fafafa"></div>
<div class="abs" style="left:446px;top:913px;width:12px;height:2px;background:#3b82f6"></div>
<div class="t" style="left:466px;top:907px;font-size:14px;color:#9a9a9a">$V2EX</div>
<div class="abs" style="left:535px;top:913px;width:12px;height:2px;background:#f97316"></div>
<div class="t" style="left:555px;top:907px;font-size:14px;color:#9a9a9a">PUMP</div>
<div class="abs" style="left:620px;top:913px;width:12px;height:2px;background:#14b8a6"></div>
<div class="t" style="left:640px;top:907px;font-size:14px;color:#9a9a9a">SOL</div>
<div class="abs" style="left:692px;top:913px;width:12px;height:2px;background:#eab308"></div>
<div class="t" style="left:712px;top:907px;font-size:14px;color:#9a9a9a">BTC</div>
<svg class="abs" style="left:0;top:0" width="1726" height="1266" viewBox="0 0 1726 1266">
<path d="M243,1063.5H941" stroke="#1c1c1f" stroke-width="1" stroke-dasharray="3 3" fill="none"/>
<path d="M243,1208.5H941" stroke="#1c1c1f" stroke-width="1" stroke-dasharray="3 3" fill="none"/>
<path d="M243.5,1063V1266" stroke="#1c1c1f" stroke-width="1" stroke-dasharray="3 3" fill="none"/>
<path d="M260.5,1063V1266" stroke="#1c1c1f" stroke-width="1" stroke-dasharray="3 3" fill="none"/>
<path d="M309.1,1063V1266" stroke="#1c1c1f" stroke-width="1" stroke-dasharray="3 3" fill="none"/>
<path d="M357.7,1063V1266" stroke="#1c1c1f" stroke-width="1" stroke-dasharray="3 3" fill="none"/>
<path d="M406.3,1063V1266" stroke="#1c1c1f" stroke-width="1" stroke-dasharray="3 3" fill="none"/>
<path d="M454.9,1063V1266" stroke="#1c1c1f" stroke-width="1" stroke-dasharray="3 3" fill="none"/>
<path d="M503.5,1063V1266" stroke="#1c1c1f" stroke-width="1" stroke-dasharray="3 3" fill="none"/>
<path d="M552.1,1063V1266" stroke="#1c1c1f" stroke-width="1" stroke-dasharray="3 3" fill="none"/>
<path d="M600.7,1063V1266" stroke="#1c1c1f" stroke-width="1" stroke-dasharray="3 3" fill="none"/>
<path d="M649.3,1063V1266" stroke="#1c1c1f" stroke-width="1" stroke-dasharray="3 3" fill="none"/>
<path d="M697.9,1063V1266" stroke="#1c1c1f" stroke-width="1" stroke-dasharray="3 3" fill="none"/>
<path d="M746.5,1063V1266" stroke="#1c1c1f" stroke-width="1" stroke-dasharray="3 3" fill="none"/>
<path d="M795.1,1063V1266" stroke="#1c1c1f" stroke-width="1" stroke-dasharray="3 3" fill="none"/>
<path d="M843.7,1063V1266" stroke="#1c1c1f" stroke-width="1" stroke-dasharray="3 3" fill="none"/>
<path d="M892.3,1063V1266" stroke="#1c1c1f" stroke-width="1" stroke-dasharray="3 3" fill="none"/>
<path d="M940.9,1063V1266" stroke="#1c1c1f" stroke-width="1" stroke-dasharray="3 3" fill="none"/>
<path d="M243.0,1177.5C244.53,1177.58 246.07,1177.67 247.6,1178.0C249.03,1178.31 250.47,1187.30 251.9,1187.3C254.73,1187.30 257.57,1187.30 260.4,1187.3C261.83,1187.30 263.27,1205.60 264.7,1205.6C268.97,1205.60 273.23,1205.60 277.5,1205.6C279.20,1205.60 280.90,1213.06 282.6,1213.5C285.43,1214.23 288.27,1213.87 291.1,1214.6C292.53,1214.97 293.97,1220.10 295.4,1220.1C323.83,1220.10 352.27,1220.10 380.7,1220.1C381.83,1220.10 382.97,1223.56 384.1,1223.7C387.80,1224.17 391.50,1223.93 395.2,1224.4C397.20,1224.65 399.20,1233.67 401.2,1234.3C402.90,1234.83 404.60,1234.57 406.3,1235.1C407.73,1235.55 409.17,1246.20 410.6,1246.2C419.80,1246.20 429.00,1245.90 438.2,1245.9C439.67,1245.90 441.13,1249.90 442.6,1249.9C449.83,1249.90 457.07,1249.90 464.3,1249.9C465.50,1249.90 466.70,1233.45 467.9,1231.1C469.37,1228.23 470.83,1226.80 472.3,1226.8C474.00,1226.80 475.70,1226.80 477.4,1226.8C479.57,1226.80 481.73,1224.30 483.9,1224.3C492.10,1224.30 500.30,1224.30 508.5,1224.3C511.17,1224.30 513.83,1213.75 516.5,1213.7C527.10,1213.50 537.70,1213.60 548.3,1213.4C549.77,1213.37 551.23,1206.50 552.7,1206.5C557.53,1206.50 562.37,1206.50 567.2,1206.5C569.60,1206.50 572.00,1207.20 574.4,1207.2C575.83,1207.20 577.27,1200.01 578.7,1200.0C615.83,1199.87 652.97,1199.93 690.1,1199.8C691.33,1199.80 692.57,1197.90 693.8,1197.9C704.17,1197.90 714.53,1197.90 724.9,1197.9C726.27,1197.90 727.63,1168.79 729.0,1168.3C730.87,1167.63 732.73,1167.97 734.6,1167.3C736.43,1166.65 738.27,1157.26 740.1,1155.3C741.03,1154.30 741.97,1153.80 742.9,1153.8C744.43,1153.80 745.97,1153.80 747.5,1153.8C748.73,1153.80 749.97,1135.87 751.2,1135.8C757.27,1135.47 763.33,1135.63 769.4,1135.3C770.77,1135.22 772.13,1098.70 773.5,1098.7C774.73,1098.70 775.97,1232.08 777.2,1266.0C777.80,1282.50 778.40,1291.25 779.0,1300.0" stroke="#f59e0b" stroke-width="2" fill="none" stroke-linejoin="round"/>
<path d="M243.0,1248.4C244.53,1248.32 246.07,1248.23 247.6,1247.9C248.73,1247.65 249.87,1238.07 251.0,1238.0C254.13,1237.80 257.27,1237.90 260.4,1237.7C261.83,1237.61 263.27,1217.20 264.7,1217.2C268.97,1217.20 273.23,1217.20 277.5,1217.2C278.93,1217.20 280.37,1210.02 281.8,1209.5C284.90,1208.37 288.00,1208.93 291.1,1207.8C292.53,1207.28 293.97,1201.30 295.4,1201.3C323.57,1201.30 351.73,1201.30 379.9,1201.3C381.30,1201.30 382.70,1197.81 384.1,1197.6C388.10,1197.00 392.10,1197.30 396.1,1196.7C398.07,1196.41 400.03,1185.10 402.0,1185.1C403.73,1185.10 405.47,1185.10 407.2,1185.1C408.33,1185.10 409.47,1172.50 410.6,1172.5C419.80,1172.50 429.00,1172.50 438.2,1172.5C439.67,1172.50 441.13,1168.50 442.6,1168.5C449.83,1168.50 457.07,1168.50 464.3,1168.5C465.50,1168.50 466.70,1186.32 467.9,1189.1C469.37,1192.50 470.83,1193.97 472.3,1194.2C474.00,1194.47 475.70,1194.33 477.4,1194.6C479.57,1194.94 481.73,1196.80 483.9,1196.8C492.10,1196.80 500.30,1196.80 508.5,1196.8C511.17,1196.80 513.83,1207.77 516.5,1207.9C527.10,1208.43 537.70,1208.17 548.3,1208.7C549.77,1208.77 551.23,1216.54 552.7,1216.6C557.53,1216.80 562.37,1216.90 567.2,1216.9C569.60,1216.90 572.00,1215.90 574.4,1215.9C575.83,1215.90 577.27,1223.90 578.7,1223.9C615.83,1223.90 652.97,1223.50 690.1,1223.5C691.33,1223.50 692.57,1225.70 693.8,1225.7C704.30,1225.70 714.80,1225.70 725.3,1225.7C726.53,1225.70 727.77,1257.63 729.0,1258.2C730.87,1259.07 732.73,1258.63 734.6,1259.5C736.40,1260.34 738.20,1290.00 740.0,1290.0C750.67,1290.00 761.33,1290.00 772.0,1290.0C773.10,1290.00 774.20,1282.00 775.3,1266.0C776.23,1252.42 777.17,1087.60 778.1,1087.6C779.67,1087.60 781.23,1091.90 782.8,1091.9C815.23,1091.90 847.67,1091.90 880.1,1091.9C881.63,1091.90 883.17,1096.00 884.7,1096.0C903.23,1096.00 921.77,1096.00 940.3,1096.0" stroke="#3b82f6" stroke-width="2" fill="none" stroke-linejoin="round"/>
</svg>
<div class="abs" style="left:178px;top:1055px;width:60px;height:170px;overflow:hidden">
<div class="t" style="font-size:12px;color:#9a9a9a;right:3px;top:5.5px;letter-spacing:0.2px">55,275,713</div>
<div class="t" style="font-size:12px;color:#9a9a9a;right:3px;top:148px;letter-spacing:0.2px">55,082,593</div></div>
<div class="t" style="font-size:12px;color:#9a9a9a;left:950px;top:1060.5px">1,038</div>
<div class="t" style="font-size:12px;color:#9a9a9a;left:950px;top:1243.5px">1,033</div>
<div class="abs" style="left:1053px;top:1237px;width:511px;height:40px;background:#19191b"></div>
<div class="abs" style="left:1053px;top:1236px;width:511px;height:1px;background:#202023"></div>
<div class="abs" style="left:1069px;top:1166px;width:34px;height:20px;border-radius:4px;background:#222224;color:#a0a0a0;font-size:12px;line-height:20px;text-align:center">#97</div>
<div class="abs" style="left:1111px;top:1164px;width:24px;height:24px;border-radius:50%;background:#262628"></div>
<div class="t" style="left:1143px;top:1161px;font-size:14px;color:#fafafa;letter-spacing:0.45px">Aj5xCG...99d9</div>
<svg class="abs" style="left:1250px;top:1171px" width="9" height="10" viewBox="0 0 9 10" fill="none" stroke="#10b981" stroke-width="1.4" stroke-linecap="round" stroke-linejoin="round"><path d="M4.5 9.5V1M1 4.5L4.5 1 8 4.5"/></svg><div class="t" style="left:1258px;top:1169px;font-size:13px;color:#10b981">1</div>
<div class="t mono" style="left:1143px;top:1180px;font-size:12px;color:#8a8a8a">Aj5xCG...99d9</div>
<div class="abs" style="left:1069px;top:1204px;width:12px;height:12px"><svg style="display:block" width="12" height="12" viewBox="0 0 24 24" fill="none" stroke="#9a9a9a" stroke-width="2" stroke-linecap="round"><circle cx="12" cy="12" r="10"/><path d="M12 6v6l4 2"/></svg></div>
<div class="t" style="left:1089px;top:1203.5px;font-size:12px;color:#9a9a9a">12/24 17:00</div>
<div class="abs" style="left:1162px;top:1200px;width:74px;height:20px;border-radius:4px;background:#222224;color:#9a9a9a;font-size:11.5px;line-height:20px;text-align:center">移出前120名</div>
<div class="abs" style="left:1477px;top:1165px;width:10px;height:10px"><svg style="display:block" width="10" height="10" viewBox="0 0 10 10" fill="none" stroke="#ef4444" stroke-width="1.5" stroke-linecap="round" stroke-linejoin="round"><path d="M1 1L9 9M9 2.5V9H2.5"/></svg></div>
<div class="t mono" style="left:1494px;top:1163px;font-size:15.5px;color:#ef4444">0</div>
<div class="t" style="right:178px;top:1188px;font-size:12px;color:#9a9a9a">持有: 378,781</div>
<div class="abs" style="left:1069px;top:1261px;width:40px;height:20px;border-radius:4px;background:#222224"></div>
<div class="abs" style="left:1117px;top:1259px;width:24px;height:24px;border-radius:50%;background:#262628"></div>
<div class="t" style="left:1149px;top:1256px;font-size:14px;color:#fafafa">E5smPy...H7o2</div>
<div class="abs" style="left:1455px;top:1260px;width:10px;height:10px"><svg style="display:block" width="10" height="10" viewBox="0 0 10 10" fill="none" stroke="#ef4444" stroke-width="1.5" stroke-linecap="round" stroke-linejoin="round"><path d="M1 1L9 9M9 2.5V9H2.5"/></svg></div>
<div class="t mono" style="right:178px;top:1256px;font-size:15.5px;color:#ef4444">-286,126</div>
</body></html>
